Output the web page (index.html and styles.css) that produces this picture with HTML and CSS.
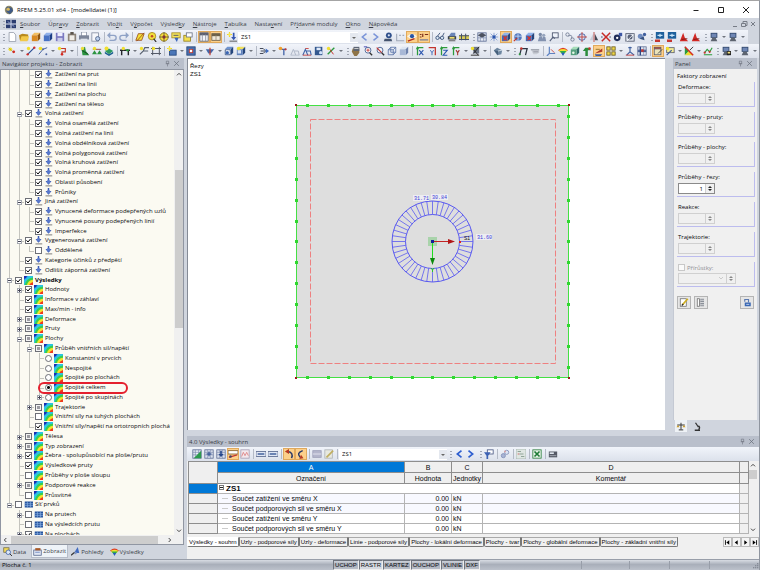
FILE: index.html
```html
<!doctype html>
<html lang="cs">
<head>
    <meta charset="UTF-8">
    <title>RFEM 5.25.01 x64 - [modelldatei (1)]</title>
    <link rel="stylesheet" href="styles.css">
</head>
<body>
    <header class="titlebar">
        <span class="logo" data-icon="logo"></span>
        <h1>RFEM 5.25.01 x64 - [modelldatei (1)]</h1>
        <div class="winButtons">
            <button aria-label="Minimalizovat"><svg viewBox="0 0 8 8"><path d="M1.500 4.500h5"/></svg></button>
            <button aria-label="Maximalizovat"><svg viewBox="0 0 8 8"><path d="M1.500 1.500h5v5h-5z"/></svg></button>
            <button aria-label="Zavřít"><svg viewBox="0 0 8 8"><path d="M1 1l6 6M7 1l-6 6"/></svg></button>
        </div>
    </header>
    <nav class="menubar">
        <i class="grip"></i>
        <span class="menuLogo" data-icon="menu"></span>
        <a href="#"><u>S</u>oubor</a>
        <a href="#">Úpr<u>a</u>vy</a>
        <a href="#"><u>Z</u>obrazit</a>
        <a href="#">Vlo<u>ž</u>it</a>
        <a href="#">V<u>ý</u>počet</a>
        <a href="#">Výsled<u>k</u>y</a>
        <a href="#"><u>N</u>ástroje</a>
        <a href="#"><u>T</u>abulka</a>
        <a href="#">Nasta<u>v</u>ení</a>
        <a href="#">Př<u>í</u>davné moduly</a>
        <a href="#"><u>O</u>kno</a>
        <a href="#"><u>N</u>ápověda</a>
        <div class="mdiButtons">
            <button aria-label="Minimalizovat okno"><svg viewBox="0 0 8 8"><path d="M2 6.500h4"/></svg></button>
            <button aria-label="Obnovit okno"><svg viewBox="0 0 8 8"><path d="M1.500 3.500h4v3h-4zM3 3V1.500h4v4H6"/></svg></button>
            <button aria-label="Zavřít okno"><svg viewBox="0 0 8 8"><path d="M2 2l4 4M6 2l-4 4"/></svg></button>
        </div>
    </nav>
    <div class="toolbar" id="bar1"></div>
    <div class="toolbar wide" id="bar2"></div>

    <main class="main">
        <aside class="dock navigator">
            <h2 class="dockTitle">Navigátor projektu - Zobrazit<span data-icon="pin"></span><span data-icon="close"></span></h2>
            <div class="treeBox">
                <div class="treeClip"><ul class="tree" id="tree"></ul></div>
                <div class="vscroll"><i data-icon="up"></i><b></b><i data-icon="down"></i></div>
                <div class="hscroll"><i data-icon="left"></i><b></b><i data-icon="right"></i></div>
            </div>
            <div class="navTabs">
                <button><i data-icon="tabData"></i>Data</button>
                <button class="active"><i data-icon="tabView"></i>Zobrazit</button>
                <button><i data-icon="tabLook"></i>Pohledy</button>
                <button><i data-icon="rainbow"></i>Výsledky</button>
            </div>
        </aside>

        <div class="work">
            <div class="top">
                <section class="view">
                    <svg id="model" viewBox="0 0 477 372" preserveAspectRatio="xMinYMin meet">
                        <text class="caption" x="2" y="9">Řezy</text>
                        <text class="caption" x="2" y="17">ZS1</text>
                        <rect x="108.500" y="46.500" width="272" height="272" fill="#dedede"/>
                        <path d="M108.500 319V46.500H381" fill="none" stroke="#45e045"/>
                        <path d="M380.500 46V318.500H108" fill="none" stroke="#45e045"/>
                        <rect x="122.500" y="60.500" width="245" height="244" fill="none" stroke="#ee8080" stroke-dasharray="6 2"/>
                        <g id="supports" fill="#2fd82f"></g>
                        <g fill="#9a1818"><rect x="107" y="45" width="2" height="2"/><rect x="380" y="45" width="2" height="2"/><rect x="107" y="318" width="2" height="2"/><rect x="380" y="318" width="2" height="2"/></g>
                        <g id="ring" fill="none" stroke="#5a5af0"></g>
                        <rect x="240" y="178" width="9" height="9" fill="#a9d3ab"/>
                        <path d="M245 182.500h16" stroke="#c32222"/>
                        <path d="M260 180l7 2.500-7 2.500z" fill="#b01616"/>
                        <path d="M244.500 183v17" stroke="#1fdc1f"/>
                        <path d="M242 199l2.500 7 2.500-7z" fill="#0c8a0c"/>
                        <rect x="243" y="181" width="3" height="3" fill="#10209a"/>
                        <path d="M243 209l1.500 2 1.500-2M244.500 211v2" stroke="#28c828" fill="none"/>
                        <rect x="271" y="182" width="2" height="2" fill="#e02020"/>
                        <g fill="#ededf2"><rect x="225" y="136" width="16" height="6"/><rect x="243" y="135" width="17" height="6"/><rect x="288" y="175" width="16" height="6"/></g>
                        <g class="value"><text x="226" y="141">31.71</text><text x="244" y="140">30.84</text><text x="289" y="180">31.60</text></g>
                        <text class="caption small" x="276" y="181">S1</text>
                    </svg>
                </section>
                <aside class="dock panel">
                    <h2 class="dockTitle">Panel<span data-icon="pin"></span><span data-icon="close"></span></h2>
                    <div class="panelBody">
                        <h3>Faktory zobrazení</h3>
                        <div id="factors"></div>
                        <div class="group">
                            <label class="tick"><input type="checkbox" disabled>Přírůstky:</label>
                            <div class="field"><select aria-label="Přírůstky" disabled><option></option></select><span class="steps off"><button aria-label="Více"></button><button aria-label="Méně"></button></span></div>
                        </div>
                        <div class="panelButtons">
                            <button aria-label="Upravit" data-icon="edit"></button>
                            <button aria-label="Stupnice" data-icon="scale"></button>
                            <button aria-label="Zamknout" data-icon="lock"></button>
                        </div>
                    </div>
                    <div class="panelTabs"><button aria-label="Faktory" class="active" data-icon="balance"></button><button aria-label="Filtr" data-icon="micro"></button></div>
                </aside>
            </div>

            <section class="dock results">
                <h2 class="dockTitle">4.0 Výsledky - souhrn<span data-icon="pin"></span><span data-icon="close"></span></h2>
                <div class="toolbar" id="bar3"></div>
                <div class="tableBox">
                    <table>
                        <colgroup><col class="cHead"><col class="cA"><col class="cB"><col class="cC"><col class="cD"><col class="cTail"></colgroup>
                        <thead>
                            <tr><th rowspan="2"></th><th class="sel">A</th><th>B</th><th>C</th><th>D</th><th></th></tr>
                            <tr><th>Označení</th><th>Hodnota</th><th>Jednotky</th><th>Komentář</th><th></th></tr>
                        </thead>
                        <tbody>
                            <tr class="case"><th class="sel"></th><td colspan="4"><i class="expander"></i>ZS1</td><td class="tail"></td></tr>
                            <tr class="tint"><th></th><td class="name">Součet zatížení ve směru X</td><td class="num">0.00</td><td>kN</td><td></td><td class="tail"></td></tr>
                            <tr class="tint"><th></th><td class="name">Součet podporových sil ve směru X</td><td class="num">0.00</td><td>kN</td><td></td><td class="tail"></td></tr>
                            <tr><th></th><td class="name">Součet zatížení ve směru Y</td><td class="num">0.00</td><td>kN</td><td></td><td class="tail"></td></tr>
                            <tr><th></th><td class="name">Součet podporových sil ve směru Y</td><td class="num">0.00</td><td>kN</td><td></td><td class="tail"></td></tr>
                        </tbody>
                    </table>
                    <div class="vscroll"><i data-icon="up"></i><b></b><i data-icon="down"></i></div>
                </div>
                <div class="sheetTabs">
                    <button class="active">Výsledky - souhrn</button>
                    <button>Uzly - podporové síly</button>
                    <button>Uzly - deformace</button>
                    <button>Linie - podporové síly</button>
                    <button>Plochy - lokální deformace</button>
                    <button>Plochy - tvar</button>
                    <button>Plochy - globální deformace</button>
                    <button>Plochy - základní vnitřní síly</button>
                    <div class="sheetNav">
                        <button aria-label="První" data-icon="first"></button><button aria-label="Předchozí" data-icon="prev"></button><button aria-label="Další" data-icon="next"></button><button aria-label="Poslední" data-icon="last"></button>
                    </div>
                </div>
            </section>
        </div>
    </main>

    <footer class="status">
        <span class="message">Plocha č. 1</span>
        <button>UCHOP</button><button class="on">RASTR</button><button>KARTEZ</button><button>OUCHOP</button><button>VLINIE</button><button>DXF</button>
        <i class="cell first"></i><i class="cell"></i><i class="cell short"></i><i class="cell short"></i><i class="cell last" data-icon="sizer"></i>
    </footer>
<script src="app.js"></script>
</body>
</html>
```
FILE: styles.css
```css
*,*::before,*::after{
    box-sizing: border-box;
}
body{
    margin: 0;
    height: 100vh;
    display: flex;
    flex-direction: column;
    overflow: hidden;
    background-color: #d0d5de;
    border-top: 1px solid #a4a4a4;
    border-right: 1px solid #8f959f;
    font: 6px/10px "Open Sans", "Noto Sans", sans-serif;
    color: #08080c;
}
h1,h2,h3,ul{
    margin: 0;
    padding: 0;
    font-size: 6px;
    font-weight: normal;
}
button,input,select{
    font: inherit;
    color: inherit;
    margin: 0;
    padding: 0;
    border: 0;
    border-radius: 0;
    background: none;
}
svg{
    display: block;
}
i{
    font-style: normal;
}

/* title and menu */
.titlebar{
    display: flex;
    align-items: center;
    height: 17px;
    padding-left: 4px;
    background-color: #fff;
}
.logo{
    width: 10px;
    margin-right: 3px;
}
.winButtons,.mdiButtons{
    display: flex;
    margin-left: auto;
}
.winButtons button{
    width: 25px;
    padding: 0 8px;
}
.winButtons svg,.mdiButtons svg{
    width: 8px;
    height: 8px;
    fill: none;
    stroke: #222;
}
.mdiButtons svg{
    stroke: #777c86;
}
.mdiButtons button{
    width: 9px;
}
.menubar{
    display: flex;
    align-items: center;
    height: 12px;
    padding-right: 1px;
}
.menubar a{
    color: #3a3e48;
    text-decoration: none;
    margin-right: 8px;
}
.menuLogo{
    width: 10px;
    margin-right: 4px;
}

/* toolbars */
.toolbar{
    display: flex;
    align-items: center;
    height: 14px;
    width: 748px;
    max-width: 100%;
    background: linear-gradient(#f1f4fa, #dce1eb);
}
.toolbar.wide{
    width: 100%;
}
.grip{
    flex: none;
    width: 6px;
    height: 9px;
    background: radial-gradient(circle, #a0a6b2 40%, transparent 50%) 3px 0/2px 3px repeat-y;
}
.sep{
    flex: none;
    width: 4px;
    height: 10px;
    background: linear-gradient(#b4bac6, #b4bac6) 2px 0/1px 100% no-repeat;
}
.tool{
    flex: none;
    width: 12px;
    height: 12px;
    padding: 1px;
}
.tool.hot{
    background-color: #fcd08a;
    border: 1px solid #e0a95c;
    padding: 0;
}
.tool svg{
    width: 10px;
    height: 10px;
}
.caret{
    flex: none;
    width: 7px;
    height: 10px;
    padding: 4px 2px;
}
.caret::after{
    content: "";
    display: block;
    border: 2px solid transparent;
    border-top-color: #70757f;
    border-bottom: 0;
}
.combo{
    flex: none;
    width: 120px;
    height: 11px;
    padding-left: 3px;
    appearance: none;
    background: #fff url("data:image/svg+xml,%3Csvg xmlns='http://www.w3.org/2000/svg' width='8' height='9'%3E%3Cpath fill='%23e4e8ef' d='M0 0h8v9H0z'/%3E%3Cpath fill='%23666' d='M2 4h4L4 6z'/%3E%3C/svg%3E") right center no-repeat;
}

/* docks */
.main{
    flex: 1;
    min-height: 0;
    display: flex;
}
.dock{
    display: flex;
    flex-direction: column;
}
.dockTitle{
    display: flex;
    align-items: center;
    height: 11px;
    padding: 0 2px;
    background-color: #b9bfcb;
    color: #383c46;
}
.dockTitle span{
    width: 9px;
}
.dockTitle span:first-of-type{
    margin-left: auto;
}
.dockTitle svg{
    width: 7px;
    height: 7px;
}
.navigator{
    flex: none;
    width: 184px;
}
.treeBox{
    flex: 1;
    min-height: 0;
    display: grid;
    grid-template: 1fr 9px / 1fr 9px;
    border: 1px solid #9096a2;
    background-color: #f0f0f0;
}
.treeClip{
    min-width: 0;
    min-height: 0;
    overflow: hidden;
    background-color: #fbfaf2;
}
.tree{
    display: grid;
    grid-auto-rows: 1fr;
    height: calc(100% + 4px);
    list-style: none;
}
.tree li{
    position: relative;
    display: flex;
    align-items: center;
    min-height: 0;
    padding-left: 3px;
    white-space: nowrap;
}
.tree label{
    display: flex;
    align-items: center;
    line-height: 9px;
}
.tree input{
    appearance: none;
    width: 7px;
    height: 7px;
    margin: 0 2px 0 1px;
    border: 1px solid #6d6f76;
    background-color: #fff;
}
.tree input:checked{
    background: #fff url("data:image/svg+xml,%3Csvg xmlns='http://www.w3.org/2000/svg' viewBox='0 0 5 5'%3E%3Cpath d='M.500 2.300l1.500 1.700L4.500 1' fill='none' stroke='%23000'/%3E%3C/svg%3E");
}
.tree input:indeterminate{
    background: #9c9ca2;
    box-shadow: inset 0 0 0 1px #f4f4f4;
}
.tree input[type=radio]{
    border-radius: 50%;
    background: #fff;
    box-shadow: none;
}
.tree input[type=radio]:checked{
    background: radial-gradient(circle, #111 1px, #fff 2px);
}
.tree label svg{
    width: 9px;
    height: 9px;
    margin-right: 2px;
}
.tree .strong{
    font-weight: bold;
}
.rail{
    flex: none;
    position: relative;
    align-self: stretch;
    width: 10px;
    background: linear-gradient(#c4c4be, #c4c4be) 5px 0/0 0 no-repeat;
}
.rail.line{
    background-size: 1px 100%;
}
.rail.half{
    background-size: 1px 50%;
}
.rail.branch::after{
    content: "";
    position: absolute;
    left: 5px;
    top: 50%;
    width: 5px;
    border-top: 1px solid #c4c4be;
}
.rail.plus::before,.rail.minus::before{
    content: "";
    position: absolute;
    z-index: 1;
    left: 3px;
    top: 3px;
    width: 5px;
    height: 5px;
    border: 1px solid #a4a8b0;
    background: linear-gradient(#445, #445) center/3px 1px no-repeat #fff;
}
.rail.plus::before{
    background: linear-gradient(#445, #445) center/3px 1px no-repeat, linear-gradient(#445, #445) center/1px 3px no-repeat #fff;
}
.marked::after{
    content: "";
    position: absolute;
    z-index: 2;
    left: 37px;
    top: -1px;
    width: 90px;
    height: 12px;
    border: 2px solid #e4202e;
    border-radius: 6px;
}
.vscroll,.hscroll{
    display: flex;
    align-items: center;
    justify-content: space-between;
    background-color: #f0f0f0;
}
.vscroll{
    flex-direction: column;
}
.vscroll b,.hscroll b{
    background-color: #cdcdcd;
}
.vscroll svg,.hscroll svg{
    width: 8px;
    height: 8px;
}
.navigator .vscroll b{
    width: 8px;
    height: 34%;
    margin: 92px 0 auto;
}
.hscroll b{
    height: 8px;
    flex: 1;
    margin: 0 8px 0 2px;
}
.navTabs{
    display: flex;
    height: 14px;
    padding-left: 2px;
    padding-bottom: 1px;
}
.navTabs button{
    display: flex;
    align-items: center;
    gap: 1px;
    padding: 0 3px 0 1px;
    margin-right: 2px;
    color: #3a3e48;
}
.navTabs .active{
    background-color: #eef3f8;
    border: 1px solid #b7bdc9;
    border-top: 0;
    padding: 0 1px;
}
.navTabs svg{
    width: 9px;
    height: 9px;
}

/* drawing area */
.work{
    flex: 1;
    min-width: 0;
    display: flex;
    flex-direction: column;
    padding-left: 3px;
}
.top{
    flex: 1;
    min-height: 0;
    display: flex;
    gap: 8px;
    padding-right: 2px;
}
.view{
    flex: 1;
    min-width: 0;
    margin-bottom: 2px;
    background-color: #fff;
    border-top: 1px solid #858b96;
    border-left: 1px solid #858b96;
    overflow: hidden;
}
.view svg{
    width: 100%;
}
.caption{
    font: 6px "Liberation Sans", sans-serif;
    fill: #111;
}
.caption.small{
    font-size: 5px;
}
.value{
    font: 5px "Liberation Mono", monospace;
    fill: #3838d8;
}

/* factor panel */
.panel{
    flex: none;
    width: 84px;
}
.panelBody{
    flex: 1;
    padding: 2px 2px 0 3px;
    background-color: #f0f0f0;
    border-left: 1px solid #c4c9d3;
}
.group{
    height: 25px;
    margin-bottom: 5px;
    padding-left: 1px;
    border-right: 1px solid #bcbcee;
    border-bottom: 1px solid #bcbcee;
}
.panelBody h3{
    height: 11px;
}
.group>label{
    display: block;
    height: 11px;
}
.field{
    display: flex;
    width: 37px;
    height: 11px;
    border: 1px solid #d0d0d0;
}
.field.on{
    background-color: #fff;
    border-color: #8a8a8a;
}
.field input{
    flex: 1;
    min-width: 0;
    text-align: right;
    padding-right: 2px;
}
.steps{
    display: flex;
    flex-direction: column;
    justify-content: space-evenly;
    align-items: center;
    width: 9px;
    background-color: #f0f0f0;
    border-left: 1px solid #d0d0d0;
}
.steps button{
    border: 2px solid transparent;
    border-bottom-color: #222;
    border-top: 0;
}
.steps button+button{
    border-bottom: 0;
    border-top: 2px solid #222;
}
.steps.off button{
    border-bottom-color: #888;
}
.steps.off button+button{
    border-top-color: #888;
}
.group>.tick{
    display: flex;
    align-items: center;
    color: #8f8f94;
}
.tick input{
    appearance: none;
    width: 7px;
    height: 7px;
    margin-right: 2px;
    border: 1px solid #c8c8c8;
    background-color: #fafafa;
}
.tick+.field{
    width: 58px;
}
.field select{
    flex: 1;
    appearance: none;
    background: url("data:image/svg+xml,%3Csvg xmlns='http://www.w3.org/2000/svg' width='9' height='9'%3E%3Cpath fill='none' stroke='%23bbb' d='M2 3l2 2 2-2'/%3E%3C/svg%3E") right center no-repeat;
}
.panelButtons{
    display: flex;
    gap: 3px;
    padding: 4px 1px 0 0;
}
.panelButtons button{
    width: 14px;
    height: 13px;
    padding: 1px;
    background-color: #e6e6e6;
    border: 1px solid #b4b4b4;
}
.panelButtons button:last-child{
    margin-left: auto;
}
.panelButtons svg,.panelTabs svg{
    width: 10px;
    height: 9px;
}
.panelTabs{
    display: flex;
    gap: 4px;
    height: 12px;
    padding-left: 2px;
}
.panelTabs button{
    padding: 0 1px;
}
.panelTabs .active{
    background-color: #eef2f6;
}

/* result table */
.results{
    flex: none;
    margin-top: 4px;
}
.results .toolbar{
    width: 100%;
    padding-left: 4px;
}
.results .combo{
    width: 108px;
}
.tableBox{
    display: flex;
    background-color: #f0f0f0;
    padding: 0 2px 0 1px;
}
table{
    flex: 1;
    table-layout: fixed;
    border-collapse: collapse;
    font: 7px/9px "Liberation Sans", sans-serif;
    background-color: #fff;
}
.cHead{
    width: 29px;
}
.cA{
    width: 187px;
}
.cB{
    width: 47px;
}
.cC{
    width: 31px;
}
.cTail{
    width: 9px;
}
td,th{
    height: 10px;
    padding: 0 1px;
    font-weight: normal;
    border: 1px solid #b4b4b4;
    white-space: nowrap;
}
th{
    background-color: #efefef;
    border-color: #8e8e8e;
}
thead th{
    height: 11px;
}
.sel{
    background-color: #0078d7;
    color: #fff;
}
.tint td{
    background-color: #f8f9ff;
}
td.tail{
    background-color: #f0f0f0;
}
.name{
    padding-left: 14px;
    background-image: linear-gradient(#ccc, #ccc);
    background-size: 6px 1px;
    background-position: 4px 50%;
    background-repeat: no-repeat;
}
.num{
    text-align: right;
    padding-right: 2px;
}
.case td:first-of-type{
    font-size: 8px;
    font-weight: bold;
    border: 1px dashed #666;
}
.expander{
    display: inline-block;
    width: 5px;
    height: 5px;
    margin-right: 2px;
    vertical-align: 1px;
    border: 1px solid #777;
    background: linear-gradient(#222, #222) center/3px 1px no-repeat;
}
.tableBox .vscroll{
    width: 8px;
}
.tableBox .vscroll b{
    width: 8px;
    height: 9px;
    margin: 1px 0 auto;
}
.sheetTabs{
    display: flex;
    align-items: flex-start;
    height: 25px;
    padding-top: 3px;
    background-color: #f0f0f0;
    font: 6px/9px "Liberation Sans", sans-serif;
}
.sheetTabs>button{
    height: 10px;
    padding: 0 1px;
    border: 1px solid #777;
    border-top-color: #aaa;
    border-radius: 0 0 2px 2px;
    white-space: nowrap;
}
.sheetTabs .active{
    background-color: #fff;
    border-color: #fff #777 #777 #fff;
}
.sheetNav{
    display: flex;
    margin-left: auto;
}
.sheetNav button{
    width: 9px;
    height: 10px;
    border: 1px solid #bbb;
    background-color: #f4f4f4;
}
.sheetNav svg{
    width: 7px;
    height: 7px;
}

/* status bar */
.status{
    display: flex;
    align-items: center;
    height: 11px;
    background: linear-gradient(#d8dce3, #a9afba 45%, #bcc1cb);
    border-top: 1px solid #989ea9;
}
.message{
    flex: 1;
    padding-left: 2px;
}
.status button{
    height: 10px;
    padding: 0 1px;
    font: 6px/8px "Liberation Sans", sans-serif;
    border: 1px solid #6f747e;
    border-right-color: #eee;
    border-bottom-color: #eee;
}
.status .on{
    background-color: #d5d9e0;
}
.cell{
    flex: none;
    width: 48px;
    height: 8px;
    border-right: 1px solid #989ea9;
}
.cell.first{
    width: 102px;
}
.cell.short{
    width: 40px;
}
.cell.last{
    width: 49px;
    border: 0;
}
.cell svg{
    width: 8px;
    height: 8px;
    margin-left: auto;
}
```
FILE: app.js
```javascript
// short helpers for the icon table, all icons sit on a 12x12 grid
function box(x, y, w, h, fill, stroke) {
    return '<rect x="' + x + '" y="' + y + '" width="' + w + '" height="' + h + '" fill="' + (fill || 'none') + '"' + (stroke ? ' stroke="' + stroke + '"' : '') + '/>';
}
function line(d, stroke, width) {
    return '<path d="' + d + '" fill="none" stroke="' + stroke + '" stroke-width="' + (width || 1) + '"/>';
}
function area(d, fill) {
    return '<path d="' + d + '" fill="' + fill + '"/>';
}
function dot(x, y, r, fill, stroke) {
    return '<circle cx="' + x + '" cy="' + y + '" r="' + r + '" fill="' + (fill || 'none') + '"' + (stroke ? ' stroke="' + stroke + '"' : '') + '/>';
}
function cube(front, top, side) {
    return area('M1 4l3-3h7L8 4z', top) + area('M8 4l3-3v7l-3 3z', side) + box(1, 4, 7, 7, front);
}
function axis(a, b) {
    return line('M3 11V2h7', '#2c9a3c', 1.5) + area('M1 4l2-4 2 4z', '#2c9a3c') + line(a, b, 1.3);
}
var spark = line('M3 0v6M0 3h6', '#f2dc28', 1.4) + dot(3, 3, 1.5, '#f6e860');
var monitor = box(2, 1, 8, 6, '#32486e') + box(3, 2, 6, 4, '#6f86b4') + area('M4 7h4l2 4H2z', '#5d6470');
var grid = box(1, 1, 10, 10, '#e8edf6', '#5c6c92') + line('M1 4h10M1 7h10M4 1v10M8 1v10', '#7888ac', .8);

var icons = {
    logo: dot(6, 6, 5, '#8f8a6c') + area('M3 2l6 1 2 4-4 4-4-3z', '#3f5a86') + dot(5, 5, 2, '#d8b85c'),
    menu: box(0, 1, 12, 10, '#2a3c70') + line('M0 6h12M6 1v10', '#e9eef8', 1.2) + line('M2 3l8 6', '#9fb0dc'),
    pin: line('M4 2h4v4H4zM3 6.500h6M6 7v4', '#6a707c'),
    close: line('M2 2l8 8M10 2l-8 8', '#6a707c', 1.3),
    up: line('M3 8l3-3 3 3', '#444', 1.5),
    down: line('M3 4l3 3 3-3', '#444', 1.5),
    left: line('M8 3L5 6l3 3', '#444', 1.5),
    right: line('M4 3l3 3-3 3', '#444', 1.5),
    first: line('M2.500 2v8', '#000', 1.5) + area('M9 2v8L4 6z', '#000'),
    prev: area('M8 2v8L3 6z', '#000'),
    next: area('M4 2v8l5-4z', '#000'),
    last: line('M9.500 2v8', '#000', 1.5) + area('M3 2v8l5-4z', '#000'),
    sizer: [[9, 3], [9, 6], [9, 9], [6, 6], [6, 9], [3, 9]].map(function (p) { return box(p[0], p[1], 2, 2, '#858b96'); }).join(''),

    doc: area('M2 0h6l3 3v9H2z', '#fff') + line('M2.500.500H8l2.500 3v8h-8z', '#8e96a6'),
    open: area('M0 4l4-2 7 1v7H1z', '#b98a1e') + area('M1 11l2-6h9l-2 6z', '#f2c84a'),
    boxOrange: cube('#d98a22', '#f3c063', '#8e5510'),
    boxBlue: cube('#4772c4', '#8fb0ea', '#1d3f86'),
    save: box(1, 1, 10, 10, '#7a78c0') + box(3, 1, 6, 4, '#eef') + box(3, 7, 6, 4, '#c9cbe8'),
    clip: box(1, 2, 10, 9, '#8d8378') + box(3, 4, 6, 6, '#f1eee8') + box(4, 0, 4, 3, '#5c554c'),
    print: box(3, 0, 6, 5, '#fff', '#8a93a6') + box(0, 4, 12, 5, '#7d869a') + box(2, 8, 8, 3, '#dbe0ea'),
    preview: box(1, 1, 8, 10, '#f5f6fa', '#8790a4') + dot(8, 8, 2.5, '#bcd0ee', '#4b5f86'),
    undo: line('M3 4h5q3 0 3 3t-3 3H3', '#8fa2c6', 1.6) + area('M0 4l4-4v8z', '#8fa2c6'),
    redo: line('M9 4H4Q1 4 1 7t3 3h5', '#8fa2c6', 1.6) + area('M12 4L8 0v8z', '#8fa2c6'),
    pen: area('M1 10l3-8h7l-3 8z', '#f4e23a') + line('M1 10l3-8h7l-3 8zM2 11L11 1', '#9a4a1a'),
    zoomYellow: dot(6, 5, 4.5, '#f3df3c', '#a5851a') + dot(6, 5, 1.5, '#c04a28') + line('M8 8l3 4', '#333', 1.5),
    target: dot(6, 6, 5, '#f3df3c', '#8a6a18') + dot(6, 6, 2, '#c02a28') + line('M6 0v12M0 6h12', '#444', .8),
    arrowY: box(1, 1, 10, 6, '#f5e55a', '#a58c26') + line('M3 4h6', '#446') + area('M4 7h5l-2 5z', '#3b66ba'),
    folderY: box(1, 4, 8, 7, '#f3df50', '#99821e') + box(4, 1, 7, 5, '#fff', '#6b7488'),
    tableV: box(1, 1, 10, 10, '#f4f6fa', '#5c6070') + box(1, 1, 10, 3, '#5c6070') + line('M4 3v8M8 3v8', '#888e9c'),
    tableH: box(1, 2, 10, 8, '#f0e8d8', '#6d6048') + box(1, 2, 10, 3, '#6d6048') + line('M6 4v6', '#998c78'),
    load: spark + area('M7 1h2v5h2L8 10 5 6h2z', '#3556b0') + line('M3 11h9', '#444'),
    treeLoad: area('M5 0h2v4h3L6 9 2 4h3z', '#3b5cb8') + dot(6, 5, 2.5, '#5878cc') + line('M2 10.500h9', '#555'),
    lt: line('M9 2L4 6l5 4', '#7a94d8', 1.8),
    gt: line('M3 2l5 4-5 4', '#7a94d8', 1.8),
    ltBlue: line('M9 2L4 6l5 4', '#2e5fd0', 2),
    gtBlue: line('M3 2l5 4-5 4', '#2e5fd0', 2),
    eye: dot(7, 4, 3.5, '#30508c') + dot(7, 4, 1.3, '#dbe6f8') + area('M2 8h8l1 3H1z', '#44536e'),
    numGray: line('M2 11V2M2 10.500h9M5 4h2M9 4h2', '#a0a8b8', 1.3),
    eyeHot: area('M0 5q6-6 12 0-6 6-12 0z', '#f8f4e8') + dot(6, 5, 2.5, '#2a54a4') + line('M1 11l8-3', '#b02c20', 1.6),
    numHot: line('M1 3h2M4.500 2v4M7 3h4M1 6h2', '#7c2c18', 1.4) + line('M1 9.500h10', '#3453a4'),
    glasses: dot(3, 7, 2, '#d8e6f4', '#324a72') + dot(8.5, 7, 2, '#d8e6f4', '#324a72') + line('M5 7h2M3 5l3-4M9 5l2-4', '#324a72'),
    boat: area('M2 5l3-4h5v4z', '#6b86b8') + box(1, 5, 10, 4, '#3a4250') + box(3, 6, 6, 2, '#f0e070') + line('M2 10.500h8', '#444'),
    rail: box(0, 4, 12, 5, '#d8cc58') + line('M0 4.500h12M0 9h12M3 2v8M8 2v8', '#45506a', 1.2),
    gridDots: grid + area('M6 1l5 3-5 3-5-3z', '#4c5260'),
    gridBlue: line('M1 6h10M6 1v10M2 2l8 8M10 2l-8 8', '#7f9ad0') + dot(6, 6, 2, '#2b55ac'),
    cubeRed: cube('#3f6abc', '#90b2ea', '#28457c') + line('M3 5l4 5M7 5l-4 5', '#d8342c', 1.5),
    cubeRound: dot(6, 6, 4.5, '#5278be') + line('M2 5h9M6 2v9', '#c7d8f4') + line('M1 11l4-4', '#c4342c', 1.5),
    people: dot(4, 3, 2, '#7b8ba8') + dot(8, 4, 2, '#98a6bf') + area('M1 11l2-6h3l1 6zM6 11l1-5h3l1 5z', '#8392b0'),
    comment: box(4, 1, 7, 6, '#eef2fa', '#47506a') + line('M1 11l4-5 2 2', '#57617c', 1.4),
    chain: dot(3, 3, 2, 'none', '#6d7890') + dot(9, 9, 2, 'none', '#6d7890') + line('M4 5q5-3 4 3', '#6d7890'),
    orbit: dot(6, 6, 4, '#d4def2', '#3b5aa4') + line('M6 0v12M0 6h12', '#c23c34'),
    mirror: area('M1 10l4-8v8z', '#c9cdd8') + area('M7 10V2l4 8z', '#454b58') + line('M6 0v12', '#b83a32'),
    cross: line('M1 1l10 10M11 1L1 11', '#c62a26', 1.8) + line('M0 6h2M10 6h2', '#335'),
    bomb: dot(5, 7, 4, '#1f2c58') + box(7, 1, 4, 4, '#3d57a4') + dot(5, 7, 1.4, '#fff'),
    photo: box(1, 2, 10, 9, '#e4e9f2', '#4c5468') + dot(6, 6, 3, '#596278') + line('M2 11L10 3', '#fff'),
    fish: dot(4, 5, 3, '#6f8cc0') + dot(9, 3, 2, '#3f5f9e') + area('M3 8l5-3 1 5z', '#35517f'),
    winBlue: box(1, 0, 10, 8, '#1d5f9c') + line('M3 4h6M6 2v4', '#c7e4f8', 1.4) + area('M0 9h6v3H0z', '#c63630'),
    pdf: area('M1 11l4-10 2 6 4 4z', '#d22a26') + line('M3 9l7-1', '#7a1512') + box(7, 1, 3, 3, '#eee'),
    monitor: monitor,

    node: dot(4, 4, 2.2, '#f0df30') + dot(8, 7, 1.7, '#d42a22') + line('M2 2l5 5', '#8a8a38', .6),
    member: line('M2 10l8-8', '#2d4f94', 1.5) + dot(2, 10, 1.4, '#d42a22') + dot(10, 2, 1.4, '#d42a22') + dot(3, 3, 2, '#f0df30'),
    poly: line('M1 10l5-6 5-2', '#4b66a0', 1.2) + dot(3, 3, 2.2, '#f0df30') + dot(10, 10, 1.2, '#4b66a0') + dot(6, 4, 1.2, '#4b66a0'),
    arc: line('M3 3h7v4H6v4', '#c43a2a', 1.4) + dot(3, 3, 2, '#f0df30') + dot(6, 10, 1.5, '#d42a22'),
    support: area('M2 4l4-3 1 5 4 5H3z', '#2b9440') + line('M2 5l8 5', '#123f1c') + dot(3, 3, 2, '#e7de3a'),
    hinge: area('M0 10l3-5 3 5zM6 10l3-5 3 5z', '#2b9440') + line('M1 4h10', '#8c3a2a') + dot(3, 3, 2, '#f0df30'),
    solid: area('M1 6l5-3 5 3-5 4z', '#2d9a62') + area('M1 7l5 3v2L1 9zM11 7l-5 3v2l5-3z', '#1b5f90') + dot(3, 3, 2.4, '#f0df30'),
    beam: line('M0 5h12M2 5v6M10 5v6', '#24262c', 1.7) + dot(4, 3, 2, '#f0df30') + dot(9, 5, 1.5, '#2d9a3c'),
    pencilBeam: line('M1 10l4-4h6M5 6l2-4h5', '#57606f', 1.4) + dot(3, 3, 2, '#f0df30'),
    frame: line('M2 1v10M10 1v10M0 3h12M0 9h12', '#555b68', 1.2) + dot(3, 3, 2, '#f0df30'),
    surface: box(3, 5, 8, 6, '#4a76b8', '#25467c') + spark,
    opening: box(1, 1, 10, 10, '#4a6fae', '#25467c') + box(4, 4, 4, 4, '#fff', '#c43a2a'),
    section: area('M1 4h10L7 9H4z', '#4468aa') + line('M6 2v9', '#c43a2a', 1.4),
    box3d: cube('#fff', '#6f93cf', '#25467c') + line('M1.500 4.500h6v6h-6z', '#25467c') + dot(4, 8, 2, '#3c67b4'),
    box3dy: cube('#6183bd', '#f0df60', '#25467c') + box(2, 5, 4, 4, '#d9e4f6') + dot(3, 3, 2, '#f0df30'),
    branch: line('M1 3h4l3 3-3 3H1M2 6h5', '#454c5c', 1.2) + area('M8 3l4 3-4 3z', '#3c6ac0'),
    hook: line('M4 4h6M7 4v7', '#4566a8', 1.6) + dot(3, 3, 2.2, '#f0a030') + dot(9, 4, 1.3, '#c63630'),
    hillGray: line('M1 11l3-7 3 7M5 6h5l1 5', '#b0b8c8', 1.2) + line('M1 11h10', '#b0b8c8'),
    hillRed: line('M1 11l3-7 3 7M5 6h5l1 5', '#3e63a8', 1.3) + line('M1 11h10M4 3h4', '#c63630'),
    saveBlue: box(1, 1, 9, 10, '#33588f') + box(3, 2, 5, 3, '#dfe9f8') + dot(8, 8, 2, '#cfe0fa'),
    wand: line('M2 10l8-8', '#2b9a3c', 1.6) + line('M3 2l6 8', '#c63630', 1.2) + dot(3, 3, 2, '#f0df30'),
    hand: area('M2 3h8v5l-3 4H4L1 7z', '#8e7448') + box(3, 1, 7, 5, '#5d6574') + line('M4 3h5', '#ddd'),
    zoomPlus: dot(6, 5, 3.5, '#fff', '#3a5488') + line('M4 5h4M6 3v4', '#c63630') + line('M8 8l3 3', '#333', 1.6) + line('M1 1h4', '#33a'),
    zoomX: dot(6, 5, 3.5, '#f1f4fb', '#3a5488') + line('M2 2l6 6', '#c63630', 1.3) + line('M8 8l3 3', '#333', 1.6),
    wire: line('M1.500 4.500h6v6h-6zM4.500 1.500h6v6h-6zM1.500 4.500l3-3M7.500 4.500l3-3M7.500 10.500l3-3', '#5a74a8'),
    cubes: cube('#a8b8d6', '#dde6f4', '#6d82ac'),
    axX: axis('M5 5l5 6M10 5l-5 6', '#2d58b0'),
    axY: line('M2 2h8v9', '#c23630', 1.5) + line('M4 5l2 3 2-3M6 8v3', '#2d58b0'),
    axZ: axis('M5 5h5l-5 6h5', '#2d58b0'),
    axMinus: axis('M6 5l2 3 2-3M8 8v3', '#a23630'),
    hatch: box(4, 1, 7, 8, '#6c7688') + line('M4 9l7-8M1 11h10M2 2l8 9', '#222', 1.1) + dot(3, 3, 2, '#f0df30'),
    gem: area('M1 5l4-3 6 3-1 5-5 1z', '#6d86a0') + area('M1 5l5 1v5z', '#46607a') + line('M6 6l5-1', '#d8e2ea'),
    gate: line('M2 11l2-8h7l-2 8', '#2c3442', 1.5) + dot(4, 3, 1.5, '#c63630') + dot(2, 10, 1.2, '#2b9a3c'),
    trayGray: area('M1 4h10v4l-3 2H4z', '#c8ccd4') + line('M1 4.500h10M4 7h6', '#878c98'),
    frameBlue: line('M4 1v8h7M4 9l-3 3', '#5d82c2', 1.4) + line('M6 4l4 4', '#c63630'),
    rainbow: area('M0 5q6-6 12 0-2 2-6 2T0 5z', '#e03a22') + area('M1 5q5-3 10 0l-2 3H3z', '#f0df30') + area('M2 6h8L6 11z', '#2fae4a') + area('M4 8h4l-2 4z', '#2a56c8'),
    cubeGreen: cube('#56a07e', '#a4ddb8', '#2c6a66') + dot(4, 8, 1.5, '#e8f8e8'),
    tree3d: area('M4 2h4l3 3H7v7H4V6H1z', '#2b8c3c') + dot(9, 3, 1.5, '#c63630'),
    rampHot: area('M1 9l9-6v4z', '#b0392a') + area('M1 10h9l-2 2H2z', '#4060a4') + line('M2 4h5', '#8a6a20'),
    tiles: box(1, 1, 4, 4, '#f0d848', '#6c5c22') + box(7, 1, 4, 4, '#f0d848', '#6c5c22') + box(1, 7, 4, 4, '#f0d848', '#6c5c22') + box(7, 7, 4, 4, '#f0d848', '#6c5c22'),
    stem: line('M6 1v6M2 11l4-4 5 4M4 2h4', '#4262a0', 1.4) + line('M1 11h10', '#c63630'),
    mesh: grid + line('M4 1v10M1 6h10', '#2c4684', 1.6) + box(5, 4, 3, 3, '#c63630'),
    panelHot: box(1, 1, 9, 10, '#5a6070') + box(2, 4, 7, 6, '#ece4ba') + line('M2 2.500h7', '#e04a30') + line('M6 9l5-5', '#333'),
    drawY: box(2, 2, 9, 6, '#f5eb94', '#5b5f6e') + line('M2 11l6-6', '#3c5c9c', 1.5) + dot(3, 3, 2, '#f0df30'),
    colors: area('M1 1v10l5-5z', '#2b9a3c') + area('M1 11h10L6 6z', '#f0df30') + line('M1 1l10 10', '#d42a22', 1.8) + line('M7 5l4-4', '#222'),
    chart: line('M1 10.500h10M2 8l3-4 3 3 3-5', '#2b9a3c', 1.3) + dot(2, 8, 1.3, '#c63630') + dot(8, 7, 1.3, '#c63630'),
    monitorB: monitor + box(7, 6, 5, 5, '#222') + box(8, 7, 3, 2, '#f0df80'),

    tGreen: grid + area('M2 11l9-9v9z', '#2b9a4c'),
    tBlue: grid + line('M3 6h6M6 3v6', '#26488c', 1.4),
    tDown: grid + area('M5 2h2v4h2L6 10 3 6h2z', '#26488c'),
    tHot: box(0, 2, 12, 4, '#fff', '#83602c') + line('M1 10l10-3', '#c63630', 1.5) + dot(3, 9, 1.5, '#446'),
    tRed: box(1, 1, 10, 10, '#f3e8ec', '#a8a0b4') + line('M2 9l2-5 2 4 2-4 2 4', '#dc8080'),
    tList: box(0, 3, 12, 6, '#e0e7f4', '#59698e') + line('M2 6h8', '#26488c', 1.5),
    hookL: line('M9 11q3-7-5-8', '#2a3a68', 1.8) + area('M1 3l5-3v6z', '#b83a22'),
    hookR: line('M8 2Q0 5 5 10', '#2a3a68', 1.8) + area('M4 12l5-1-3-4z', '#b83a22'),
    tGray: box(1, 2, 10, 8, '#b4b6cc', '#9c9eb8') + line('M1 6h10', '#e9eaf4'),
    tEdit: box(1, 1, 9, 10, '#e7e9e0', '#b0b4b8') + line('M3 10l8-8', '#c0ae60', 2),
    filter: box(4, 1, 7, 5, '#fff', '#4c5a84') + area('M0 4h8L5 8v4H3V8z', '#3c62b4'),
    pills: dot(4, 8, 2.5, '#a8b4d4', '#8290b8') + dot(8, 4, 2.5, '#dce4f4', '#8290b8') + box(5, 2, 2, 2, '#dca0a0'),
    listGray: box(0, 0, 12, 12, '#dfe6e2', '#a5b4ac') + line('M2 3h4M4 6h5M6 9h4', '#90a498', 1.3) + box(2, 5, 2, 2, '#d8a0a0'),
    excel: box(1, 1, 10, 10, '#e9f4e8', '#2f8040') + line('M3 3l6 6M9 3l-6 6', '#1c7a34', 2),
    calc: box(1, 3, 10, 7, '#555a66') + box(2, 4, 5, 2, '#dfe6ee') + line('M2 8h8', '#b0b4be'),

    results: '<rect width="12" height="12" fill="#1f49d4"/>' + area('M0 12V5L5 0h7v12z', '#2cc4e4') + area('M1 12Q3 3 12 2v10z', '#37cf4c') + area('M4 12q1-6 8-7v7z', '#f3e32e') + area('M7 12q1-3 5-4v4z', '#ee3a1e') + box(0, 0, 3, 3, '#1a2fae'),
    meshIcon: box(1, 2, 11, 8, '#24539e') + line('M1 5h11M1 7.500h11M4.500 2v8M8.500 2v8', '#8fb4e4', .9),
    tabData: box(1, 1, 7, 6, '#f2d858', '#6f6a40') + dot(7, 7, 3, '#dce8f8', '#3458a0') + line('M9 9l3 3', '#333', 1.3),
    tabView: box(1, 4, 10, 7, '#dfe6f4', '#4f5f88') + line('M3 3h7', '#a85a28', 3) + line('M3 7h6', '#5a78b8'),
    tabLook: area('M4 8l5-8 2 8z', '#3f6ac0') + line('M0 11l5-4', '#333', 1.6) + dot(6, 8, 1.6, '#7e94c4'),
    edit: box(1, 1, 8, 10, '#fff', '#666') + line('M4 9l7-8', '#cfae1e', 2.4) + line('M3 10l2-2', '#222', 1.5),
    scale: box(1, 1, 3, 10, '#fff', '#666') + box(5, 1, 5, 10, '#8a8f98') + line('M5 3h5M5 6h5M5 9h5', '#eee'),
    lock: box(3, 6, 8, 5, '#3a68b4') + line('M3 5V2h5v4', '#5a78b0', 1.5) + line('M5 8.500h4', '#dfe8f6'),
    balance: line('M6 1v9M1 4h10M3 10.500h6', '#333', 1.3) + area('M0 7l2-3 2 3zM8 7l2-3 2 3z', '#c89a28'),
    micro: line('M4 1l4 6M3 11h7M8 5q3 3 0 5', '#333', 1.7)
};

function svg(name) {
    return '<svg viewBox="0 0 12 12" aria-hidden="true">' + icons[name] + '</svg>';
}

// "|" separator, ":" grip, "v" caret, "*" pressed button, "=" combo box
function fillBar(id, spec) {
    document.getElementById(id).innerHTML = spec.split(' ').map(function (t) {
        if (t === '|') return '<i class="sep"></i>';
        if (t === ':') return '<i class="grip"></i>';
        if (t === 'v') return '<button class="caret" aria-label="Další"></button>';
        if (t === '=') return '<select class="combo" aria-label="Zatěžovací stav"><option>ZS1</option></select>';
        var hot = t[0] === '*';
        var name = hot ? t.slice(1) : t;
        return '<button class="tool' + (hot ? ' hot' : '') + '" aria-label="' + name + '">' + svg(name) + '</button>';
    }).join('');
}
fillBar('bar1', ': doc open boxOrange boxBlue save clip print preview | undo redo | pen zoomYellow target arrowY folderY | *tableV *tableH | load = lt gt eye numGray *eyeHot *numHot | glasses boat rail : gridDots gridBlue *cubeRed cubeRound cubeRed people comment | chain orbit mirror cross bomb photo fish : winBlue winBlue pdf pdf : monitor v monitor v');
fillBar('bar2', ': node v member poly v arc v | support hinge solid | beam v pencilBeam frame | surface v opening v section v box3d box3dy v | branch v hook hillGray hillRed saveBlue wand v : hand zoomPlus zoomX wire cubes | axX axY axZ axMinus v hatch v | gem v : gate trayGray | frameBlue rainbow cubeGreen tree3d *rampHot tiles v stem mesh | *panelHot drawY v colors v chart : monitorB v monitor v');
fillBar('bar3', 'tGreen tBlue tDown *tHot tRed | tList tList | *hookL *hookR | tGray tEdit | = : ltBlue gtBlue : filter | pills | listGray | excel | calc');

// level, state (x checked, o empty, m mixed, r/R radio), expander, icon, text
var rows = [
    [3, 'x', '', 'treeLoad', 'Zatížení na prut'],
    [3, 'x', '', 'treeLoad', 'Zatížení na linii'],
    [3, 'x', '', 'treeLoad', 'Zatížení na plochu'],
    [3, 'x', '', 'treeLoad', 'Zatížení na těleso'],
    [2, 'x', 'minus', 'treeLoad', 'Volná zatížení'],
    [3, 'x', '', 'treeLoad', 'Volná osamělá zatížení'],
    [3, 'x', '', 'treeLoad', 'Volná zatížení na linii'],
    [3, 'x', '', 'treeLoad', 'Volná obdélníková zatížení'],
    [3, 'x', '', 'treeLoad', 'Volná polygonová zatížení'],
    [3, 'x', '', 'treeLoad', 'Volná kruhová zatížení'],
    [3, 'x', '', 'treeLoad', 'Volná proměnná zatížení'],
    [3, 'x', '', 'treeLoad', 'Oblasti působení'],
    [3, 'x', '', 'treeLoad', 'Průniky'],
    [2, 'x', 'minus', 'treeLoad', 'Jiná zatížení'],
    [3, 'x', '', 'treeLoad', 'Vynucené deformace podepřených uzlů'],
    [3, 'x', '', 'treeLoad', 'Vynucené posuny podepřených linií'],
    [3, 'x', '', 'treeLoad', 'Imperfekce'],
    [2, 'x', 'minus', 'treeLoad', 'Vygenerovaná zatížení'],
    [3, 'o', '', 'treeLoad', 'Oddělené'],
    [2, 'x', '', 'treeLoad', 'Kategorie účinků z předpětí'],
    [2, 'x', '', 'treeLoad', 'Odlišit záporná zatížení'],
    [1, 'x', 'minus', 'results', 'Výsledky', 'strong'],
    [2, 'x', 'plus', 'results', 'Hodnoty'],
    [2, 'x', '', 'results', 'Informace v záhlaví'],
    [2, 'x', '', 'results', 'Max/min - info'],
    [2, 'm', 'plus', 'results', 'Deformace'],
    [2, 'm', 'plus', 'results', 'Pruty'],
    [2, 'm', 'minus', 'results', 'Plochy'],
    [3, 'm', 'minus', 'results', 'Průběh vnitřních sil/napětí'],
    [4, 'r', '', 'results', 'Konstantní v prvcích'],
    [4, 'r', '', 'results', 'Nespojité'],
    [4, 'r', '', 'results', 'Spojité po plochách'],
    [4, 'R', '', 'results', 'Spojité celkem', 'marked'],
    [4, 'r', 'plus', 'results', 'Spojité po skupinách'],
    [3, 'm', 'plus', 'results', 'Trajektorie'],
    [3, 'o', '', 'results', 'Vnitřní síly na tuhých plochách'],
    [3, 'x', '', 'results', 'Vnitřní síly/napětí na ortotropních plochá'],
    [2, 'm', 'plus', 'results', 'Tělesa'],
    [2, 'm', 'plus', 'results', 'Typ zobrazení'],
    [2, 'x', 'plus', 'results', 'Žebra - spolupůsobící na ploše/prutu'],
    [2, 'x', '', 'results', 'Výsledkové pruty'],
    [2, 'o', '', 'results', 'Průběhy v ploše sloupu'],
    [2, 'm', 'plus', 'results', 'Podporové reakce'],
    [2, 'o', '', 'results', 'Průsvitné'],
    [1, 'o', 'minus', 'meshIcon', 'Síť prvků'],
    [2, 'o', 'plus', 'meshIcon', 'Na prutech'],
    [2, 'o', '', 'meshIcon', 'Na výsledcích prutu'],
    [2, 'x', 'plus', 'meshIcon', 'Na plochách']
];
// true when a later row continues the line of this level
function goesOn(i, level) {
    for (var k = i + 1; k < rows.length; k++) {
        if (rows[k][0] === level) return true;
        if (rows[k][0] < level) return false;
    }
    return false;
}
document.getElementById('tree').innerHTML = rows.map(function (row, i) {
    var rails = '';
    for (var level = 1; level <= row[0]; level++) {
        var own = level === row[0];
        var cls = goesOn(i, level) ? ' line' : own ? ' half' : '';
        rails += '<i class="rail' + cls + (own ? ' branch ' + row[2] : '') + '"></i>';
    }
    var radio = row[1].toLowerCase() === 'r';
    var input = '<input type="' + (radio ? 'radio" name="course' : 'checkbox') + '"' + (/[xR]/.test(row[1]) ? ' checked' : '') + (row[1] === 'm' ? ' data-mixed' : '') + '>';
    return '<li class="' + (row[5] || '') + '">' + rails + '<label>' + input + svg(row[3]) + row[4] + '</label></li>';
}).join('');
document.querySelectorAll('[data-mixed]').forEach(function (el) {
    el.indeterminate = true;
});

var factors = ['Deformace:', 'Průběhy - pruty:', 'Průběhy - plochy:', 'Průběhy - řezy:', 'Reakce:', 'Trajektorie:'];
document.getElementById('factors').innerHTML = factors.map(function (name, i) {
    var on = i === 3;
    return '<div class="group"><label for="f' + i + '">' + name + '</label>' +
        '<div class="field' + (on ? ' on' : '') + '"><input id="f' + i + '" type="text"' + (on ? ' value="1"' : ' disabled') + '>' +
        '<span class="steps' + (on ? '' : ' off') + '"><button aria-label="Více"></button><button aria-label="Méně"></button></span></div></div>';
}).join('');

document.querySelectorAll('[data-icon]').forEach(function (el) {
    el.innerHTML = svg(el.dataset.icon);
});

// line supports round the plate, 13 on each side
var supports = '';
for (var s = 0; s < 13; s++) {
    var at = Math.round(118 + s * 20.9);
    supports += box(at, 45, 3, 3, '#2fd82f') + box(at, 317, 3, 3, '#2fd82f') + box(107, at - 62, 3, 3, '#2fd82f') + box(379, at - 62, 3, 3, '#2fd82f');
}
document.getElementById('supports').innerHTML = supports;

// result diagram on the circular section
var ring = '<circle cx="244.500" cy="182.500" r="40.500"/><circle cx="244.500" cy="182.500" r="27"/>';
var d = '';
for (var a = 0; a < 44; a++) {
    var c = Math.cos(a * Math.PI / 22), n = Math.sin(a * Math.PI / 22);
    d += 'M' + (244.5 + 27 * c) + ' ' + (182.5 + 27 * n) + 'L' + (244.5 + 40.5 * c) + ' ' + (182.5 + 40.5 * n);
}
document.getElementById('ring').innerHTML = ring + '<path d="' + d + '" stroke-width=".8"/>';
```
